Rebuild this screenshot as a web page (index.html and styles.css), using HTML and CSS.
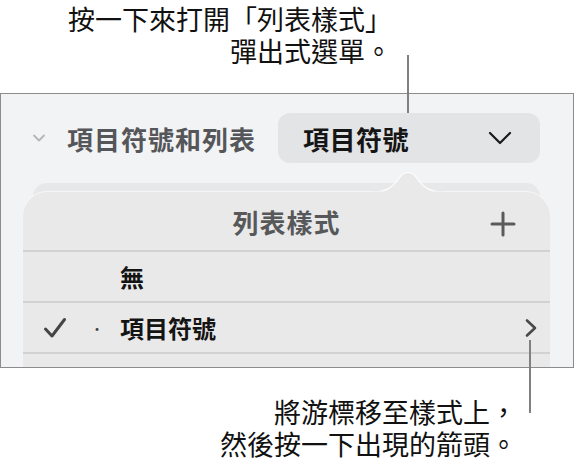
FILE: index.html
```html
<!DOCTYPE html>
<html lang="zh-Hant">
<head>
<meta charset="utf-8">
<title>列表樣式</title>
<link rel="stylesheet" href="styles.css">
</head>
<body>
<div class="page">
  <div class="callout callout-top">
    <div class="callout-text">
      <div>按一下來打開「列表樣式」</div>
      <div>彈出式選單。</div>
    </div>
  </div>

  <div class="panel">
    <div class="section-row">
      <div class="section-title">
        <svg class="disclosure" width="14" height="10" viewBox="0 0 14 10"><path d="M2 2.5 L7 7.5 L12 2.5" fill="none" stroke="#b5b5b7" stroke-width="1.8" stroke-linecap="round" stroke-linejoin="round"/></svg>
        <span class="section-label">項目符號和列表</span>
      </div>
      <div class="popup-button">
        <span class="popup-label">項目符號</span>
        <svg class="popup-chevron" width="24" height="14" viewBox="0 0 24 14"><path d="M2 2 L12 12 L22 2" fill="none" stroke="#1a1a1a" stroke-width="2.2" stroke-linecap="round" stroke-linejoin="round"/></svg>
      </div>
    </div>

    <div class="stack">
      <div class="back-card"></div>
      <div class="popover">
        <svg class="popover-arrow" width="70" height="24" viewBox="0 0 70 24"><path d="M0 23 C14 23 20 18 27 8 C31 2 39 2 43 8 C50 18 56 23 70 23" fill="#e9e9e9" stroke="#ffffff" stroke-width="1.2"/><rect x="0" y="22.5" width="70" height="2" fill="#e9e9e9"/></svg>
        <div class="popover-header">
          <span class="popover-title">列表樣式</span>
          <svg class="plus" width="26" height="26" viewBox="0 0 26 26"><path d="M13 2 V24 M2 13 H24" stroke="#5a5a5a" stroke-width="3" stroke-linecap="round"/></svg>
        </div>
        <div class="list-row">
          <span class="check-cell"></span>
          <span class="dot-cell"></span>
          <span class="row-label">無</span>
        </div>
        <div class="list-row">
          <span class="check-cell">
            <svg width="24" height="22" viewBox="0 0 24 22"><path d="M2.5 12 L9 19 L21.5 2.5" fill="none" stroke="#454545" stroke-width="3" stroke-linecap="round" stroke-linejoin="round"/></svg>
          </span>
          <span class="dot-cell">•</span>
          <span class="row-label">項目符號</span>
          <svg class="row-chevron" width="14" height="20" viewBox="0 0 14 20"><path d="M3 2.5 L11 10 L3 17.5" fill="none" stroke="#4a4a4a" stroke-width="2.6" stroke-linecap="round" stroke-linejoin="round"/></svg>
        </div>
        <div class="list-row list-row-partial"></div>
      </div>
    </div>
  </div>

  <div class="callout callout-bottom">
    <div class="callout-text">
      <div>將游標移至樣式上，</div>
      <div>然後按一下出現的箭頭。</div>
    </div>
  </div>

  <span class="leader leader-top"></span>
  <span class="leader leader-bottom"></span>
</div>
</body>
</html>
```

FILE: styles.css
```css
* { box-sizing: border-box; }

html, body {
  margin: 0;
  padding: 0;
  background: #ffffff;
}

body {
  font-family: "Noto Sans CJK TC", "Noto Sans", sans-serif;
  color: #111111;
}

.page {
  position: relative;
  width: 575px;
  height: 466px;
  overflow: hidden;
}

.callout {
  display: flex;
}

.callout-text {
  font-size: 27px;
  line-height: 32px;
  text-align: right;
  font-weight: 400;
  color: #111;
}

.callout-top {
  padding-left: 68px;
  padding-top: 3px;
  height: 93px;
}

.callout-bottom {
  justify-content: flex-end;
  padding-right: 58px;
  padding-top: 28px;
}

.panel {
  width: 574px;
  height: 275px;
  border: 1px solid #8c8c8c;
  background: #f2f3f5;
  overflow: hidden;
  padding-top: 19px;
}

.section-row {
  display: flex;
  align-items: center;
  justify-content: space-between;
  padding-left: 31px;
  padding-right: 33px;
}

.section-title {
  display: flex;
  align-items: center;
  gap: 21px;
}

.section-label {
  font-size: 26px;
  font-weight: 700;
  color: #555659;
  letter-spacing: 1px;
}

.popup-button {
  width: 262px;
  height: 50px;
  border-radius: 12px;
  background: #e3e4e6;
  display: flex;
  align-items: center;
  justify-content: space-between;
  padding-left: 25px;
  padding-right: 28px;
}

.popup-label {
  font-size: 26px;
  font-weight: 700;
  color: #151515;
  letter-spacing: 0.5px;
}

.stack {
  position: relative;
  margin-top: 20px;
  padding-left: 32px;
  padding-right: 33px;
}

.back-card {
  height: 30px;
  border-radius: 14px 14px 0 0;
  background: #e7e8ea;
}

.popover {
  position: relative;
  margin: -21px -10px 0 -10px;
  background: #e9e9e9;
  border-radius: 24px 24px 0 0;
  box-shadow: 0 -1px 0 rgba(255,255,255,0.6);
}

.popover-arrow {
  position: absolute;
  top: -23px;
  left: 350px;
}

.popover-header {
  position: relative;
  height: 60px;
  display: flex;
  align-items: center;
  justify-content: center;
  border-bottom: 2px solid #d2d2d3;
}

.popover-title {
  font-size: 26px;
  font-weight: 700;
  color: #57585a;
  letter-spacing: 1px;
}

.plus {
  position: absolute;
  right: 34px;
  top: 19px;
}

.list-row {
  height: 51px;
  display: flex;
  align-items: center;
  border-bottom: 2px solid #d2d2d3;
  padding-left: 20px;
  padding-right: 12px;
}

.check-cell {
  width: 45px;
  display: flex;
  align-items: center;
}

.dot-cell {
  width: 32px;
  font-size: 14px;
  color: #444;
  padding-left: 2px;
}

.row-label {
  font-size: 24px;
  font-weight: 700;
  color: #141414;
  flex: 1;
}

.list-row-partial {
  border-bottom: none;
}

.leader {
  position: absolute;
  width: 2px;
  background: #808080;
}

.leader-top {
  left: 407px;
  top: 55px;
  height: 58px;
}

.leader-bottom {
  left: 529px;
  top: 340px;
  height: 73px;
}
```
